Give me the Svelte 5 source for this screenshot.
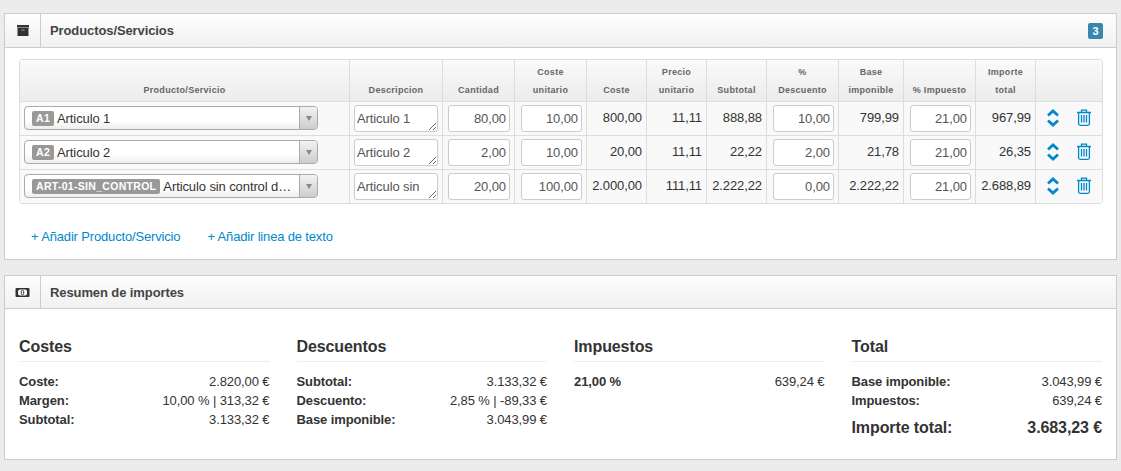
<script>
  const columns = [
    { key: "product", width: 329, lines: ["Producto/Servicio"] },
    { key: "desc", width: 93, lines: ["Descripcion"] },
    { key: "qty", width: 72, lines: ["Cantidad"] },
    { key: "unitCost", width: 72, lines: ["Coste", "unitario"] },
    { key: "cost", width: 60, lines: ["Coste"] },
    { key: "unitPrice", width: 60, lines: ["Precio", "unitario"] },
    { key: "subtotal", width: 60, lines: ["Subtotal"] },
    { key: "discount", width: 72, lines: ["%", "Descuento"] },
    { key: "base", width: 65, lines: ["Base", "imponible"] },
    { key: "tax", width: 72, lines: ["% Impuesto"] },
    { key: "total", width: 60, lines: ["Importe", "total"] },
    { key: "actions", width: 67, lines: [] }
  ];

  const rows = [
    { code: "A1", name: "Articulo 1", desc: "Articulo 1", qty: "80,00", unitCost: "10,00", cost: "800,00", unitPrice: "11,11", subtotal: "888,88", discount: "10,00", base: "799,99", tax: "21,00", total: "967,99" },
    { code: "A2", name: "Articulo 2", desc: "Articulo 2", qty: "2,00", unitCost: "10,00", cost: "20,00", unitPrice: "11,11", subtotal: "22,22", discount: "2,00", base: "21,78", tax: "21,00", total: "26,35" },
    { code: "ART-01-SIN_CONTROL", name: "Articulo sin control de stock", desc: "Articulo sin", qty: "20,00", unitCost: "100,00", cost: "2.000,00", unitPrice: "111,11", subtotal: "2.222,22", discount: "0,00", base: "2.222,22", tax: "21,00", total: "2.688,89" }
  ];

  const summary = [
    { title: "Costes", lines: [["Coste:", "2.820,00 €"], ["Margen:", "10,00 % | 313,32 €"], ["Subtotal:", "3.133,32 €"]] },
    { title: "Descuentos", lines: [["Subtotal:", "3.133,32 €"], ["Descuento:", "2,85 % | -89,33 €"], ["Base imponible:", "3.043,99 €"]] },
    { title: "Impuestos", lines: [["21,00 %", "639,24 €"]] },
    { title: "Total", lines: [["Base imponible:", "3.043,99 €"], ["Impuestos:", "639,24 €"]], grand: ["Importe total:", "3.683,23 €"] }
  ];
</script>

<main class="page">
  <section class="panel">
    <header class="panel-head">
      <span class="head-icon">
        <svg width="12" height="11" viewBox="0 0 12 11" aria-hidden="true">
          <rect x="0" y="0" width="12" height="2.500" fill="#333" />
          <rect x="0.500" y="2.500" width="11" height="0.600" fill="#777" />
          <rect x="0.500" y="3" width="11" height="8" fill="#333" />
          <rect x="4.500" y="4.500" width="3" height="1.200" fill="#888" />
        </svg>
      </span>
      <h2>Productos/Servicios</h2>
      <span class="count">3</span>
    </header>

    <div class="panel-body lines-body">
      <table>
        <colgroup>
          {#each columns as col}
            <col style="width: {col.width}px" />
          {/each}
        </colgroup>
        <thead>
          <tr>
            {#each columns as col}
              <th>
                {#each col.lines as line, i}
                  {#if i > 0}<br />{/if}{line}
                {/each}
              </th>
            {/each}
          </tr>
        </thead>
        <tbody>
          {#each rows as row}
            <tr>
              <td class="pick-cell">
                <div class="picker">
                  <div class="picker-value">
                    <span class="code">{row.code}</span>
                    <span class="name">{row.name}</span>
                  </div>
                  <div class="picker-arrow"><i></i></div>
                </div>
              </td>
              <td class="desc-cell"><textarea readonly value={row.desc}></textarea></td>
              <td class="input-cell"><input class="wide" readonly value={row.qty} /></td>
              <td class="input-cell"><input readonly value={row.unitCost} /></td>
              <td class="num">{row.cost}</td>
              <td class="num">{row.unitPrice}</td>
              <td class="num">{row.subtotal}</td>
              <td class="input-cell"><input readonly value={row.discount} /></td>
              <td class="num">{row.base}</td>
              <td class="input-cell"><input readonly value={row.tax} /></td>
              <td class="num">{row.total}</td>
              <td class="actions">
                <svg width="14" height="18" viewBox="0 0 14 18" aria-hidden="true">
                  <path d="M2 6.500 7 2l5 4.500M2 11.500 7 16l5-4.500" fill="none" stroke="#0088cc" stroke-width="2.800" />
                </svg>
                <svg width="16" height="17" viewBox="0 0 16 17" aria-hidden="true">
                  <path d="M1 3.500h14M5.500 3.500V1.200h5v2.300" fill="none" stroke="#0088cc" stroke-width="1.300" />
                  <path d="M2.600 3.500v11.300q0 1.500 1.500 1.500h7.800q1.500 0 1.500-1.500V3.500" fill="none" stroke="#0088cc" stroke-width="1.300" />
                  <path d="M5.500 6v7.500M8 6v7.500M10.500 6v7.500" fill="none" stroke="#0088cc" stroke-width="1.300" />
                </svg>
              </td>
            </tr>
          {/each}
        </tbody>
      </table>

      <div class="add-links">
        <a href="#add">+ Añadir Producto/Servicio</a>
        <a href="#text">+ Añadir linea de texto</a>
      </div>
    </div>
  </section>

  <section class="panel">
    <header class="panel-head compact">
      <span class="head-icon">
        <svg width="15" height="9" viewBox="0 0 15 9" aria-hidden="true">
          <rect x="0.500" y="0" width="14" height="9" rx="1" fill="#333" />
          <rect x="3" y="1.500" width="9" height="6" rx="2" fill="#fff" />
          <rect x="6.300" y="2.500" width="2.400" height="4" rx="1" fill="none" stroke="#333" stroke-width="1" />
        </svg>
      </span>
      <h2>Resumen de importes</h2>
    </header>

    <div class="panel-body summary">
      {#each summary as block}
        <div class="block">
          <h3>{block.title}</h3>
          {#each block.lines as [label, value]}
            <div class="line"><strong>{label}</strong><span>{value}</span></div>
          {/each}
          {#if block.grand}
            <div class="line grand"><strong>{block.grand[0]}</strong><strong>{block.grand[1]}</strong></div>
          {/if}
        </div>
      {/each}
    </div>
  </section>
</main>

<style>
  :global(body) {
    background: #ececec;
    font-family: "Liberation Sans", Arial, sans-serif;
    font-size: 13px;
    letter-spacing: -0.1px;
    color: #333;
  }

  .page {
    display: flex;
    flex-direction: column;
    gap: 15px;
    padding: 13px 4px 11px;
  }

  .panel {
    background: #fff;
    border: 1px solid #ccc;
  }

  .panel-head {
    display: flex;
    align-items: center;
    height: 33px;
    border-bottom: 1px solid #ccc;
    background: linear-gradient(#fdfdfd, #f1f1f1);
  }

  .panel-head.compact {
    height: 32px;
  }

  .head-icon {
    display: flex;
    align-items: center;
    justify-content: center;
    width: 35px;
    height: 100%;
    border-right: 1px solid #ccc;
  }

  .panel-head h2 {
    flex: 1;
    margin: 0 0 0 9px;
    font-size: 13px;
    font-weight: bold;
    color: #444;
  }

  .count {
    width: 15px;
    height: 16px;
    margin-right: 13px;
    border-radius: 2px;
    background: #3a87ad;
    color: #fff;
    font-size: 11px;
    font-weight: bold;
    line-height: 16px;
    text-align: center;
  }

  .lines-body {
    padding: 11px 14px 16px;
  }

  table {
    width: 1084px;
    table-layout: fixed;
    border-collapse: separate;
    border-spacing: 0;
    border: 1px solid #ddd;
    border-radius: 3px;
  }

  th {
    height: 39px;
    padding: 0 2px 2px;
    border-left: 1px solid #ddd;
    border-bottom: 1px solid #ddd;
    background: linear-gradient(#fafafa, #ececec);
    color: #666;
    font-size: 9px;
    font-weight: bold;
    letter-spacing: 0.3px;
    line-height: 18px;
    vertical-align: bottom;
    text-align: center;
  }

  td {
    height: 33px;
    padding: 0;
    border-left: 1px solid #ddd;
    border-bottom: 1px solid #ddd;
    background: #f9f9f9;
    vertical-align: middle;
  }

  th:first-child,
  td:first-child {
    border-left: 0;
  }

  tbody tr:last-child td {
    border-bottom: 0;
  }

  .num {
    height: 31px;
    padding: 0 4px 2px 0;
    color: #333;
    text-align: right;
  }

  .pick-cell {
    height: 32px;
    padding: 0 31px 1px 4px;
  }

  .picker {
    display: flex;
    height: 22px;
    overflow: hidden;
    border: 1px solid #aaa;
    border-radius: 4px;
    background: linear-gradient(#fff 60%, #eee);
  }

  .picker-value {
    display: flex;
    flex: 1;
    align-items: center;
    min-width: 0;
    padding-left: 7px;
    white-space: nowrap;
  }

  .code {
    flex: none;
    height: 15px;
    padding: 0 4px;
    border-radius: 2px;
    background: #999;
    color: #fff;
    font-size: 10.5px;
    font-weight: bold;
    letter-spacing: 0.3px;
    line-height: 15px;
  }

  .name {
    overflow: hidden;
    margin: 0 5px 0 3px;
    color: #333;
    text-overflow: ellipsis;
  }

  .picker-arrow {
    display: flex;
    flex: none;
    align-items: center;
    justify-content: center;
    width: 17px;
    border-left: 1px solid #aaa;
    background: linear-gradient(#f2f2f2, #ccc);
  }

  .picker-arrow i {
    border-top: 5px solid #888;
    border-left: 3px solid transparent;
    border-right: 3px solid transparent;
  }

  textarea,
  input {
    display: block;
    box-sizing: border-box;
    height: 27px;
    border: 1px solid #ccc;
    border-radius: 3px;
    background: #fff;
    color: #555;
    font-family: inherit;
    font-size: 13px;
    letter-spacing: -0.1px;
    outline: none;
  }

  textarea {
    width: 84px;
    margin: 0 auto;
    padding: 5px 2px;
    overflow: hidden;
    line-height: 15px;
  }

  input {
    width: 61px;
    margin-left: 6px;
    padding: 2px 3px;
    text-align: right;
  }

  input.wide {
    width: 62px;
    margin-left: 5px;
  }

  .actions {
    height: 31px;
    padding: 0 0 2px 10px;
    white-space: nowrap;
  }

  .actions svg {
    vertical-align: middle;
  }

  .actions svg + svg {
    margin-left: 12px;
  }

  .add-links {
    display: flex;
    gap: 27px;
    padding: 27px 0 0 12px;
    line-height: 12px;
  }

  .add-links a {
    color: #0088cc;
    letter-spacing: -0.16px;
    text-decoration: none;
  }

  .summary {
    display: grid;
    grid-template-columns: repeat(4, 1fr);
    column-gap: 27px;
    padding: 28px 14px 12px;
  }

  .block {
    min-height: 110px;
  }

  .block h3 {
    margin: 0 0 10px;
    padding-bottom: 4px;
    border-bottom: 1px solid #eee;
    font-size: 16px;
    font-weight: bold;
    line-height: 20px;
  }

  .line {
    display: flex;
    justify-content: space-between;
    height: 19px;
    line-height: 19px;
  }

  .grand {
    margin-top: 8px;
    font-size: 16px;
  }
</style>
